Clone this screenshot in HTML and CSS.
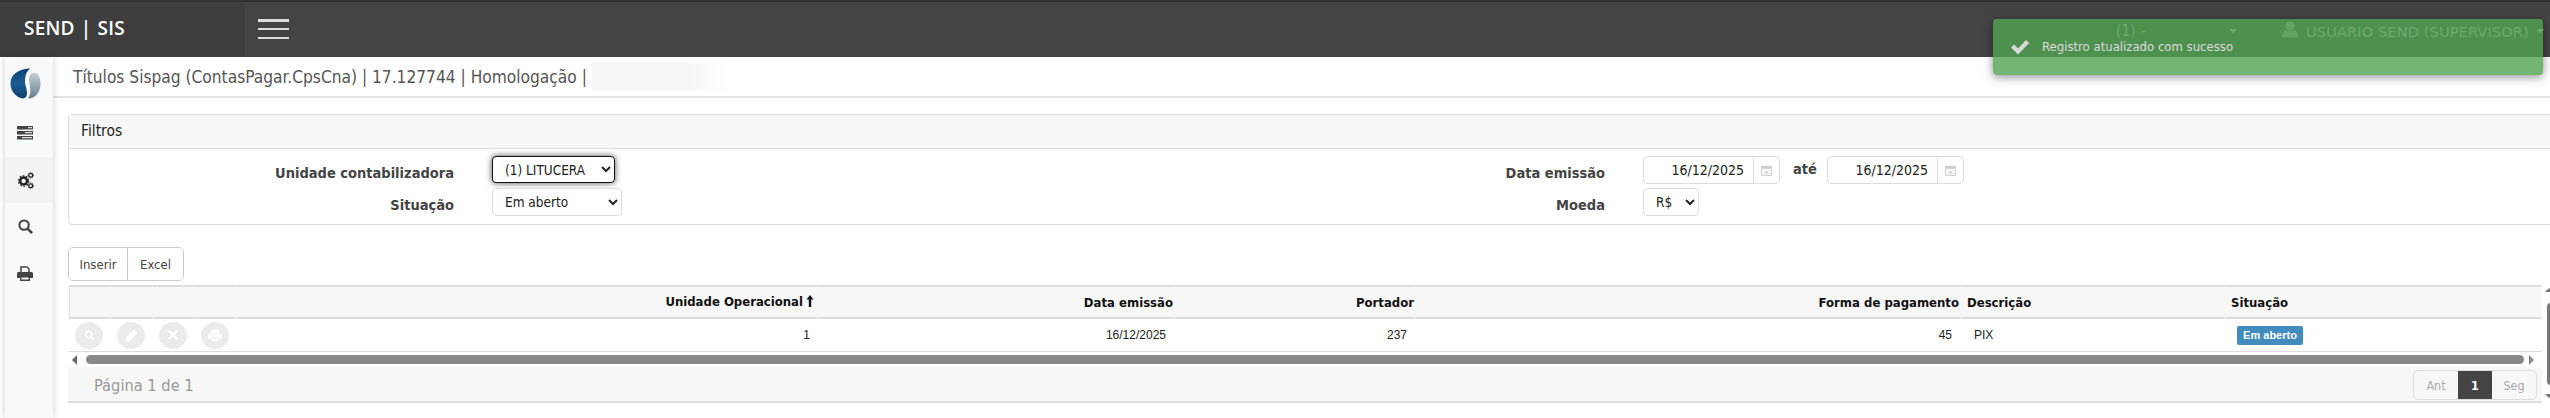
FILE: index.html
```html
<!DOCTYPE html>
<html lang="pt-BR">
<head>
<meta charset="utf-8">
<title>Títulos Sispag</title>
<link rel="stylesheet" href="styles.css">
</head>
<body>
<header class="topbar">
  <div class="brand">SEND | SIS</div>
  <button class="burger" aria-label="Menu"><i></i><i></i><i></i></button>
  <div class="top-right">
    <span class="unit">(1) -</span>
    <span class="caret caret-unit"></span>
    <svg class="user-ico" viewBox="0 0 16 16" width="16" height="17"><circle cx="8" cy="4.5" r="4.5" fill="#aaa"/><path d="M0 16v-2.500c0-3 2.500-4.500 4.500-4.500h7c2 0 4.500 1.500 4.500 4.500V16z" fill="#aaa"/></svg>
    <span class="user">USUARIO SEND (SUPERVISOR)</span>
    <span class="caret"></span>
  </div>
</header>

<div class="toast">
  <svg class="check" viewBox="0 0 20 16" width="20" height="16"><path d="M1 8.500l3-3 4 4L16 1l3.200 3L8 15.500z" fill="#fff"/></svg>
  <span>Registro atualizado com sucesso</span>
</div>

<div class="shell">
  <nav class="sidebar">
    <div class="side-logo">
      <svg viewBox="0 0 32 32" width="31" height="31">
        <defs>
          <linearGradient id="lb" x1="0" y1="0" x2="0" y2="1"><stop offset="0" stop-color="#0b3f74"/><stop offset=".5" stop-color="#1b5b92"/><stop offset="1" stop-color="#0d3f6e"/></linearGradient>
          <linearGradient id="lg" x1="0" y1="0" x2="0" y2="1"><stop offset="0" stop-color="#c5cfd6"/><stop offset="1" stop-color="#68808f"/></linearGradient>
        </defs>
        <path d="M21 .5C10 .5 .500 6 .500 16c0 9 7 15 13 15.500 3-.5 4.500-3 4-7-.5-5-2.500-8-2-13C16 6 18 2.500 21 .5z" fill="url(#lb)"/>
        <path d="M18.500 31.500c8 0 13-6.500 13-15.500 0-4.500-1.500-8.500-4-10.500-3-1.500-6.500-.5-7.500 3.500-1 5 1 8.500 1 14 0 3.500-1 6.500-2.500 8.500z" fill="url(#lg)"/>
      </svg>
    </div>
    <a class="side-item">
      <svg viewBox="0 0 16 14" width="16" height="14"><path d="M0 0h16v3.500H0zM0 5h16v3.500H0zM0 10h16v3.500H0z" fill="#444"/><path d="M11 1h4v1.200h-4zM8 6h7v1.200H8zM5 11h10v1.200H5z" fill="#ddd"/></svg>
    </a>
    <a class="side-item active">
      <svg viewBox="0 0 18 18" width="17" height="17" fill="none" stroke="#222"><circle cx="7" cy="9.500" r="3.600" stroke-width="2.600"/><circle cx="7" cy="9.500" r="5.400" stroke-width="1.400" stroke-dasharray="1.800 1.600"/><circle cx="14.500" cy="3.500" r="2" stroke-width="1.300"/><circle cx="14.500" cy="3.500" r="3" stroke-width=".9" stroke-dasharray="1.100 1.100"/><circle cx="14.500" cy="14.500" r="2" stroke-width="1.300"/><circle cx="14.500" cy="14.500" r="3" stroke-width=".9" stroke-dasharray="1.100 1.100"/></svg>
    </a>
    <a class="side-item">
      <svg viewBox="0 0 16 16" width="15" height="15" fill="none" stroke="#444"><circle cx="6.500" cy="6.500" r="5" stroke-width="2.200"/><path d="M10.500 10.500L15 15" stroke-width="2.800"/></svg>
    </a>
    <a class="side-item">
      <svg viewBox="0 0 16 15" width="16" height="15"><path d="M4 6V1h6l2 2v3" fill="none" stroke="#444" stroke-width="1.500"/><path d="M1.500 6h13c.8 0 1.500.7 1.500 1.500V12h-3V10H3v2H0V7.500C0 6.700.7 6 1.500 6z" fill="#444"/><path d="M3.700 10.700h8.600v3.600H3.700z" fill="#f8f9fb" stroke="#444" stroke-width="1.400"/></svg>
    </a>
  </nav>

  <main class="content">
    <div class="page-title">
      <span>Títulos Sispag (ContasPagar.CpsCna) | 17.127744 | Homologação |</span>
      <span class="blurred"></span>
    </div>

    <section class="panel">
      <h3 class="panel-head">Filtros</h3>
      <div class="filters">
        <div class="filter-col">
          <label class="f-label">Unidade contabilizadora</label>
          <select class="ctl sel-unit"><option>(1) LITUCERA</option></select>
          <label class="f-label">Situação</label>
          <select class="ctl sel-sit"><option>Em aberto</option></select>
        </div>
        <div class="filter-col col-right">
          <label class="f-label">Data emissão</label>
          <div class="date-row">
            <div class="date">
              <input class="date-in" value="16/12/2025">
              <span class="date-ico"><svg viewBox="0 0 12 12" width="11" height="11"><path d="M.5 1.500h11v10H.5z" fill="#f4f4f4" stroke="#ccc"/><path d="M.5 1.500h11v2.500H.5z" fill="#ccc"/><path d="M5 6.500h2v3H5z" fill="#ccc"/></svg></span>
            </div>
            <span class="ate">até</span>
            <div class="date">
              <input class="date-in" value="16/12/2025">
              <span class="date-ico"><svg viewBox="0 0 12 12" width="11" height="11"><path d="M.5 1.500h11v10H.5z" fill="#f4f4f4" stroke="#ccc"/><path d="M.5 1.500h11v2.500H.5z" fill="#ccc"/><path d="M5 6.500h2v3H5z" fill="#ccc"/></svg></span>
            </div>
          </div>
          <label class="f-label">Moeda</label>
          <select class="ctl sel-moeda"><option>R$</option></select>
        </div>
      </div>
    </section>

    <div class="btn-group">
      <button class="btn">Inserir</button><button class="btn">Excel</button>
    </div>

    <div class="grid-wrap">
      <table class="grid">
        <colgroup>
          <col class="c-a"><col class="c-a"><col class="c-a"><col class="c-a"><col class="c-uo"><col class="c-de"><col class="c-po"><col class="c-fp"><col class="c-ds"><col class="c-si">
        </colgroup>
        <thead>
          <tr>
            <th></th><th></th><th></th><th></th>
            <th class="r">Unidade Operacional<svg class="sort" viewBox="0 0 8 12" width="8" height="12"><path d="M4 0l3.500 4.500H5.200V12H2.800V4.500H.5z" fill="#111"/></svg></th>
            <th class="r">Data emissão</th>
            <th class="r">Portador</th>
            <th class="r">Forma de pagamento</th>
            <th class="l">Descrição</th>
            <th class="l">Situação</th>
          </tr>
        </thead>
        <tbody>
          <tr>
            <td class="act"><span class="round"><svg viewBox="0 0 14 14" width="11" height="11" fill="none" stroke="#fff"><circle cx="6" cy="6" r="4" stroke-width="1.800"/><path d="M9 9l4 4" stroke-width="2.200"/></svg></span></td>
            <td class="act"><span class="round"><svg viewBox="0 0 16 16" width="15" height="15"><path d="M11 1.500l3.500 3.500-8.500 8.500-4.500 1 1-4.500z" fill="#fff"/></svg></span></td>
            <td class="act"><span class="round"><svg viewBox="0 0 14 14" width="12" height="12" fill="none" stroke="#fff" stroke-width="2.400"><path d="M2 2l10 10M12 2L2 12"/></svg></span></td>
            <td class="act"><span class="round"><svg viewBox="0 0 16 14" width="14" height="13"><path d="M3.500 5V.5h9V5zM0 5.500h16V11h-3V9H3v2H0zM4 10h8v3.500H4z" fill="#fff"/></svg></span></td>
            <td class="r uo">1</td>
            <td class="r pr">16/12/2025</td>
            <td class="r pr">237</td>
            <td class="r pr">45</td>
            <td class="l pl">PIX</td>
            <td class="l pl-b"><span class="badge">Em aberto</span></td>
          </tr>
        </tbody>
      </table>
      <div class="hscroll">
        <span class="arrow arrow-l"></span>
        <span class="thumb"></span>
        <span class="arrow arrow-r"></span>
      </div>
      <footer class="pager-bar">
        <span class="page-info">Página 1 de 1</span>
        <div class="pager">
          <span class="pg">Ant</span><span class="pg cur">1</span><span class="pg">Seg</span>
        </div>
      </footer>
    </div>
  </main>
</div>

<div class="vscroll">
  <span class="v-arrow up"></span>
  <span class="v-thumb"></span>
  <span class="v-arrow down"></span>
</div>
</body>
</html>
```
FILE: styles.css
```css
* { box-sizing: border-box; }
html, body { margin: 0; height: 418px; overflow: hidden; background: #fff; }
body { font-family: "DejaVu Sans Condensed", "DejaVu Sans", sans-serif; font-size: 13px; color: #444; position: relative; }

.topbar { height: 57px; background: #444; border-top: 2px solid #333; display: flex; align-items: stretch; }
.brand { width: 245px; padding: 0 0 3px 24px; background: #3e3e3e; color: #fff; font: 600 19px/52px "Open Sans", sans-serif; letter-spacing: .2px; word-spacing: 1px; }
.burger { width: 31px; height: 20px; margin: 17px 0 0 13px; padding: 0; border: 0; background: none; display: flex; flex-direction: column; justify-content: space-between; }
.burger i { display: block; height: 2.500px; background: #ddd; }
.top-right { position: absolute; top: 19px; left: 2116px; display: flex; align-items: center; height: 24px; color: #ccc; font-size: 15.500px; }
.unit { width: 113px; }
.caret { display: inline-block; width: 0; height: 0; border: 4px solid transparent; border-top-color: #ccc; border-bottom: 0; margin-left: 7px; }
.caret-unit { margin: 0 45px 0 0; }
.user-ico { margin-right: 8px; margin-top: -4px; }
.user { font-family: "DejaVu Sans", sans-serif; font-size: 14.600px; letter-spacing: .1px; }

.toast { position: absolute; z-index: 5; top: 19px; left: 1993px; width: 550px; height: 56px; padding: 20px 0 0 17px; background: #51a351; opacity: .8; color: #fff; border-radius: 4px; box-shadow: 0 2px 10px rgba(0,0,0,.55); display: flex; align-items: flex-start; gap: 12px; font-size: 13px; line-height: 15px; }

.shell { display: flex; height: 361px; padding-left: 5px; }
.sidebar { width: 48px; flex: none; background: #f8f9fb; box-shadow: 0 0 7px rgba(0,0,0,.2); position: relative; }
.side-logo { height: 53px; display: flex; align-items: center; justify-content: center; padding: 0 7px 0 0; }
.side-item { height: 46.700px; display: flex; align-items: center; justify-content: center; padding-right: 8px; }
.side-item.active { background: #f3f3f3; }

.content { flex: 1; min-width: 0; }
.page-title { height: 41px; padding-left: 20px; border-bottom: 2px solid #e3e3e3; display: flex; align-items: center; gap: 5px; font-size: 17.200px; color: #555; margin-bottom: 16px; }
.blurred { width: 136px; height: 28px; background: linear-gradient(90deg, #f6f6f6 70%, #fff); }

.panel { margin-left: 15px; margin-right: -6px; height: 111px; border: 1px solid #ddd; border-radius: 4px; }
.panel-head { margin: 0; height: 34px; padding-left: 12px; background: #f7f7f7; border-bottom: 1px solid #ddd; font: 400 15.500px/33px "DejaVu Sans Condensed", sans-serif; color: #222; }
.filters { display: flex; padding-top: 7px; }
.filter-col { width: 1151px; display: grid; grid-template-columns: 385px auto; grid-auto-rows: 32px; column-gap: 38px; justify-content: start; }
.col-right { width: auto; }
.f-label { font-weight: 700; font-size: 14.500px; text-align: right; line-height: 31px; color: #444; padding-top: 2px; }
.ctl { height: 28px; border: 1px solid #ddd; border-radius: 4px; background: #fff; font: 13.500px "DejaVu Sans Condensed", sans-serif; color: #222; padding-left: 8px; display: block; }
.sel-unit { width: 123px; border: 1px solid #111; box-shadow: 0 0 6px rgba(0,0,0,.7); height: 27px; }
.sel-sit { width: 130px; }
.sel-moeda { width: 56px; }
.date-row { display: flex; align-items: flex-start; }
.date { display: flex; height: 28px; border: 1px solid #ddd; border-radius: 4px; }
.date-in { width: 110px; border: 0; border-right: 1px solid #ddd; padding: 0 9px 0 0; text-align: right; font: 14px "DejaVu Sans Condensed", sans-serif; color: #222; background: none; border-radius: 4px 0 0 4px; }
.date-ico { width: 25px; display: flex; align-items: center; justify-content: center; }
.ate { width: 47px; padding-left: 13px; font-weight: 700; font-size: 14.500px; line-height: 26px; }

.btn-group { margin: 22px 0 4px 15px; display: inline-flex; height: 34px; border: 1px solid #ccc; border-radius: 5px; overflow: hidden; vertical-align: top; }
.btn { width: 55px; border: 0; background: #fff; font: 13px "DejaVu Sans Condensed", sans-serif; color: #444; padding: 0; }
.btn:first-child { border-right: 1px solid #ccc; width: 59px; }

.grid-wrap { margin-left: 15px; width: 2474px; }
.grid { margin-left: 1px; width: 2473px; table-layout: fixed; border-collapse: separate; border-spacing: 0; }
.c-a { width: 42px; }
.c-uo { width: 581px; }
.c-de { width: 357px; }
.c-po { width: 241px; }
.c-fp { width: 545px; }
.c-ds { width: 264px; }
.grid th { height: 34px; padding: 0 1px 0 8px; background: #f7f7f7; border-top: 2px solid #ddd; border-bottom: 2px solid #ddd; border-right: 1px solid transparent; font-size: 13px; font-weight: 700; color: #111; }
.grid th:first-child { border-left: 1px solid #ddd; }
.grid th.r { text-align: right; }
.grid th.l { text-align: left; padding-left: 6px; }
.sort { margin: 0 3px 3px 3px; vertical-align: middle; }
.grid th:nth-child(5) { padding-right: 0; }
.grid td { height: 33px; padding: 0; border-bottom: 1px solid #ddd; font: 12px "Liberation Sans", sans-serif; color: #222; }
.grid td.r { text-align: right; }
.grid td.uo { padding-right: 8px; }
.grid td.pr { padding-right: 9px; }
.grid td.pl { padding-left: 13px; }
.grid td.pl-b { padding-left: 12px; }
.grid td.act { padding: 0 0 0 6px; }
.grid .round { display: flex; align-items: center; justify-content: center; width: 28px; height: 27px; border-radius: 50%; background: #ebebeb; }
.badge { display: inline-block; width: 66px; height: 19px; background: #428bbd; border-radius: 2px; color: #fff; font: 700 11px/19px "Liberation Sans", sans-serif; text-align: center; vertical-align: middle; }

.hscroll { height: 15px; padding-top: 3px; display: flex; margin-left: 1px; }
.arrow { width: 0; height: 0; border: 5px solid transparent; }
.arrow-l { border-right-color: #666; border-left: 0; margin: 0 9px 0 3px; }
.arrow-r { border-left-color: #888; border-right: 0; margin-left: 5px; }
.thumb { width: 2438px; height: 9px; background: #888; border-radius: 5px; }

.pager-bar { height: 36px; background: #f7f7f7; border-bottom: 2px solid #ddd; display: flex; justify-content: space-between; align-items: center; padding: 0 5px 0 26px; }
.page-info { font-size: 16.300px; color: #999; padding-top: 2px; }
.pager { display: flex; height: 30px; margin-top: 2px; border: 1px solid #ddd; border-radius: 5px; overflow: hidden; font-size: 12.500px; color: #aaa; }
.pg { width: 44px; display: flex; align-items: center; justify-content: center; }
.pg.cur { width: 34px; background: #444; color: #fff; font-weight: 700; }

.vscroll { position: absolute; top: 288px; left: 2545px; width: 5px; height: 110px; }
.v-arrow { position: absolute; left: 0; width: 0; height: 0; border: 4px solid transparent; }
.v-arrow.up { top: 0; border-bottom-color: #777; border-top: 0; }
.v-arrow.down { bottom: 0; border-top-color: #777; border-bottom: 0; }
.v-thumb { position: absolute; top: 15px; left: 2px; width: 8px; height: 82px; background: #777; border-radius: 4px; }
```
